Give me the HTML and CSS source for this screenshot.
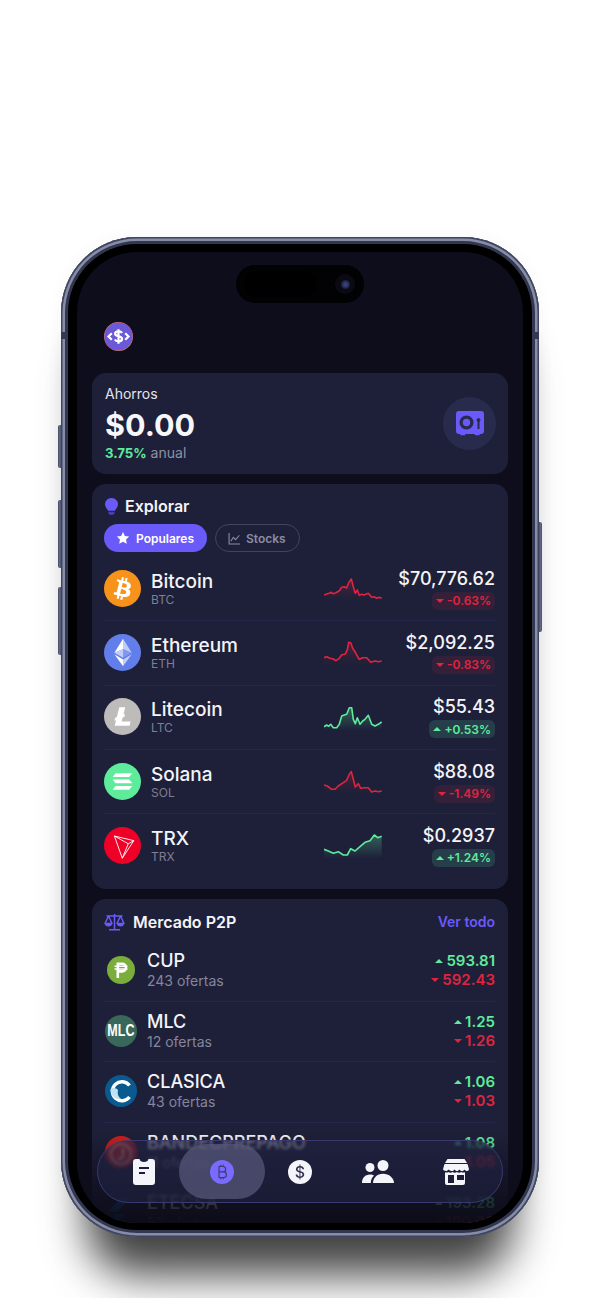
FILE: index.html
```html
<!DOCTYPE html>
<html lang="es">
<head>
<meta charset="utf-8">
<title>Wallet</title>
<link rel="stylesheet" href="styles.css">
</head>
<body>
<div class="device">
  <span class="side-btn btn-a"></span><span class="side-btn btn-b"></span><span class="side-btn btn-c"></span><span class="side-btn btn-d"></span>
  <span class="band band-l"></span><span class="band band-r"></span>
  <div class="screen">
    <div class="island"><span class="lens-a"></span><span class="lens-b"><i></i></span></div>
    <header class="top">
      <svg class="logo" viewBox="0 0 29 29"><defs><linearGradient id="lg" x1="0" y1="0" x2="1" y2="1"><stop offset="0" stop-color="#f59e2a"/><stop offset=".5" stop-color="#e0457a"/><stop offset="1" stop-color="#f5b02a"/></linearGradient></defs><circle cx="14.5" cy="14.5" r="14.5" fill="url(#lg)"/><circle cx="14.500" cy="14.500" r="14.100" fill="#6a5ad8"/><path d="M7.800 11.200 4.500 14.500l3.300 3.300M21.200 11.200l3.300 3.300-3.300 3.300" fill="none" stroke="#fff" stroke-width="2.200"/><path d="M18 11c-.5-1-1.800-1.700-3.500-1.700-2 0-3.400 1-3.400 2.500 0 3.400 7 1.800 7 5 0 1.500-1.500 2.500-3.600 2.500-1.800 0-3.100-.7-3.700-1.800M14.500 7.300v14.400" fill="none" stroke="#fff" stroke-width="2.200"/></svg>
    </header>

    <section class="card savings">
      <div>
        <div class="sav-label">Ahorros</div>
        <div class="sav-amount">$0.00</div>
        <div class="sav-rate"><b>3.75%</b> anual</div>
      </div>
      <div class="safe">
        <svg width="28" height="25" viewBox="0 0 28 25"><path fill="#6a5af9" fill-rule="evenodd" d="M3 0h22a3 3 0 0 1 3 3v17a3 3 0 0 1-3 3h-1l-.6 1.200H19L18.500 23h-9L9 24.200H4.600L4 23H3a3 3 0 0 1-3-3V3a3 3 0 0 1 3-3Zm7.500 4.500a7 7 0 1 0 0 14 7 7 0 0 0 0-14Zm0 3.300a3.700 3.700 0 1 1 0 7.400 3.700 3.700 0 0 1 0-7.400Zm12-.800a2 2 0 0 0-1 3.700v7.300h2v-7.300a2 2 0 0 0-1-3.700Z"/></svg>
      </div>
    </section>

    <section class="card explore">
      <div class="card-head">
        <svg width="13" height="17" viewBox="0 0 13 17"><path fill="#6a5af9" d="M6.500 0A6.300 6.300 0 0 1 13 6.200c0 2.300-1.300 3.600-2.200 5-.4.600-.6 1-.7 1.500H2.900c-.1-.5-.3-.9-.7-1.500C1.300 9.800 0 8.500 0 6.200A6.300 6.300 0 0 1 6.500 0Z"/><path fill="#4b3fb0" d="M3.400 13.800h6.200v1.200c0 1.100-1.300 2-3.100 2s-3.100-.9-3.100-2Z"/></svg>
        <h2>Explorar</h2>
      </div>
      <div class="chips">
        <span class="chip chip-on"><svg width="14" height="14" viewBox="0 0 24 24"><path fill="#fff" d="m12 1.800 3.200 6.700 7.300 1-5.300 5.100 1.300 7.300L12 18.400l-6.500 3.500 1.300-7.300L1.500 9.500l7.300-1Z"/></svg>Populares</span>
        <span class="chip chip-off"><svg width="13" height="13" viewBox="0 0 24 24"><path fill="none" stroke="#8a8ca3" stroke-width="2" d="M2 2v20h20M5 17l5-7 4 4 7-8"/></svg>Stocks</span>
      </div>

      <div class="row">
        <svg class="coin" viewBox="0 0 32 32"><circle cx="16" cy="16" r="16" fill="#f7931a"/><path fill="#fff" d="M23.189 14.020c.314-2.096-1.283-3.223-3.465-3.975l.708-2.840-1.728-.430-.690 2.765c-.454-.114-.920-.220-1.385-.326l.695-2.783L15.596 6l-.708 2.839c-.376-.086-.746-.170-1.104-.260l.002-.009-2.384-.595-.460 1.846s1.283.294 1.256.312c.700.175.826.638.805 1.006l-.806 3.235c.048.012.110.030.180.057l-.183-.045-1.130 4.532c-.086.212-.303.531-.793.410.018.025-1.256-.313-1.256-.313l-.858 1.978 2.250.561c.418.105.828.215 1.231.318l-.715 2.872 1.727.430.708-2.840c.472.127.930.245 1.378.357l-.706 2.828 1.728.430.715-2.866c2.948.558 5.164.333 6.097-2.333.752-2.146-.037-3.385-1.588-4.192 1.130-.260 1.980-1.003 2.207-2.538zm-3.950 5.538c-.533 2.147-4.148.986-5.320.695l.950-3.805c1.172.293 4.929.872 4.370 3.110zm.535-5.569c-.487 1.953-3.495.960-4.470.717l.860-3.450c.975.243 4.118.696 3.610 2.733z"/></svg>
        <div class="names"><div class="name">Bitcoin</div><div class="tick">BTC</div></div>
        <svg class="spark" viewBox="0 0 58 32"><defs><linearGradient id="gr" x1="0" y1="0" x2="0" y2="1"><stop offset="0" stop-color="#e0243f" stop-opacity=".22"/><stop offset=".85" stop-color="#e0243f" stop-opacity="0"/></linearGradient><linearGradient id="gg" x1="0" y1="0" x2="0" y2="1"><stop offset="0" stop-color="#5eeb9b" stop-opacity=".32"/><stop offset=".9" stop-color="#5eeb9b" stop-opacity="0"/></linearGradient></defs><path fill="url(#gr)" d="M0 23 2.700 22 5.300 21.300 6.700 20.300 9.300 21.700 12 20.700 15.300 18.700 17.700 15.300 20.300 14.700 22.700 16 24.700 10.700 27.300 7 29.300 14.700 31.300 21.300 33.300 18 35.300 23.300 37.700 22.300 40 23 44.300 21.300 47.700 25.300 50 24.700 52.700 26.300 55 25.300 57.700 26.300V32H0Z"/><polyline class="l-red" points="0,23 2.700,22 5.300,21.300 6.700,20.300 9.300,21.700 12,20.700 15.300,18.700 17.700,15.300 20.300,14.700 22.700,16 24.700,10.700 27.300,7 29.300,14.700 31.300,21.300 33.300,18 35.300,23.300 37.700,22.300 40,23 44.300,21.300 47.700,25.300 50,24.700 52.700,26.300 55,25.300 57.700,26.300"/></svg>
        <div class="vals"><div class="price">$70,776.62</div><span class="badge b-red"><i class="tri-d"></i>-0.63%</span></div>
      </div>

      <div class="row">
        <svg class="coin" viewBox="0 0 32 32"><circle cx="16" cy="16" r="16" fill="#627eea"/><g fill="#fff"><path fill-opacity=".602" d="M16.498 4v8.870l7.497 3.350z"/><path d="M16.498 4 9 16.220l7.498-3.350z"/><path fill-opacity=".602" d="M16.498 21.968v6.027L24 17.616z"/><path d="M16.498 27.995v-6.028L9 17.616z"/><path fill-opacity=".2" d="m16.498 20.573 7.497-4.353-7.497-3.348z"/><path fill-opacity=".602" d="m9 16.220 7.498 4.353v-7.701z"/></g></svg>
        <div class="names"><div class="name">Ethereum</div><div class="tick">ETH</div></div>
        <svg class="spark" viewBox="0 0 58 32"><path fill="url(#gr)" d="M0 21.700 2.700 20.700 6 22.300 9.300 23 12 24.700 15.300 22.300 17.700 18.700 21 18.300 23.300 14 24.700 6.300 26.700 6.700 28.700 12.300 31 15.700 32.700 19 35.300 23.300 38.700 21.700 42.700 21.700 46.700 26.300 51 25 54.300 25.700 57.700 25V32H0Z"/><polyline class="l-red" points="0,21.700 2.700,20.700 6,22.300 9.300,23 12,24.700 15.300,22.300 17.700,18.700 21,18.300 23.300,14 24.700,6.300 26.700,6.700 28.700,12.300 31,15.700 32.700,19 35.300,23.300 38.700,21.700 42.700,21.700 46.700,26.300 51,25 54.300,25.700 57.700,25"/></svg>
        <div class="vals"><div class="price">$2,092.25</div><span class="badge b-red"><i class="tri-d"></i>-0.83%</span></div>
      </div>

      <div class="row">
        <svg class="coin" viewBox="0 0 32 32"><circle cx="16" cy="16" r="16" fill="#bebbbb"/><path fill="#fff" d="m10.427 19.214-1.427.554.688-2.759 1.444-.580L13.213 8h5.129l-1.519 6.196 1.410-.571-.680 2.750-1.427.571-.848 3.483H23L22.127 24H9.252z"/></svg>
        <div class="names"><div class="name">Litecoin</div><div class="tick">LTC</div></div>
        <svg class="spark" viewBox="0 0 58 32"><path fill="url(#gg)" d="M0 25.700 2.700 24 4.700 25.300 6.700 23.300 9.300 26.700 12.700 26.700 15.300 23.300 17.700 15 20.300 14 22.700 13.300 25.300 6.700 27.700 6.700 29.300 18.300 31.300 22.700 33.300 16.700 36 23.300 38.700 20 41 18.300 44.300 14.300 47.700 23.300 51 25 54.300 23.300 57.700 21V32H0Z"/><polyline class="l-green" points="0,25.700 2.700,24 4.700,25.300 6.700,23.300 9.300,26.700 12.700,26.700 15.300,23.300 17.700,15 20.300,14 22.700,13.300 25.300,6.700 27.700,6.700 29.300,18.300 31.300,22.700 33.300,16.700 36,23.300 38.700,20 41,18.300 44.300,14.300 47.700,23.300 51,25 54.300,23.300 57.700,21"/></svg>
        <div class="vals"><div class="price">$55.43</div><span class="badge b-green"><i class="tri-u"></i>+0.53%</span></div>
      </div>

      <div class="row">
        <svg class="coin" viewBox="0 0 32 32"><circle cx="16" cy="16" r="16" fill="#5eeb9b"/><g fill="#fff"><path d="M10 8.800h14.500l-2.700 3.300H7.500Z"/><path d="M7.500 14.300h14.300l2.700 3.200H10Z"/><path d="M10 19.900h14.500l-2.700 3.300H7.500Z"/></g></svg>
        <div class="names"><div class="name">Solana</div><div class="tick">SOL</div></div>
        <svg class="spark" viewBox="0 0 58 32"><path fill="url(#gr)" d="M0 20 3.300 21 7.700 24.300 11 24.300 14.300 21 19.300 17.700 22.700 15.300 25.300 9.300 27.300 6.700 29.300 14.300 31.300 22 34.300 18.700 36.700 23.300 41 22.700 44.300 22.700 47.700 27 51 26 54.300 26.700 57.700 26V32H0Z"/><polyline class="l-red" points="0,20 3.300,21 7.700,24.300 11,24.300 14.300,21 19.300,17.700 22.700,15.300 25.300,9.300 27.300,6.700 29.300,14.300 31.300,22 34.300,18.700 36.700,23.300 41,22.700 44.300,22.700 47.700,27 51,26 54.300,26.700 57.700,26"/></svg>
        <div class="vals"><div class="price">$88.08</div><span class="badge b-red"><i class="tri-d"></i>-1.49%</span></div>
      </div>

      <div class="row">
        <svg class="coin" viewBox="0 0 32 32"><circle cx="16" cy="16" r="16" fill="#ef0027"/><path fill="none" stroke="#fff" stroke-width=".8" stroke-linejoin="round" d="M9 7.800 25.800 11.800 15.800 27ZM9 7.800 21 14.500 15.800 27M21 14.500 25.800 11.800"/></svg>
        <div class="names"><div class="name">TRX</div><div class="tick">TRX</div></div>
        <svg class="spark" viewBox="0 0 58 32"><path fill="url(#gg)" d="M0 20.300 4.300 22 9.300 24.300 14.300 22.700 19.300 26 23.300 26 26.700 19.700 31 22 36 17.700 41 13.300 46 11.700 50.300 6 53.700 8.700 57.700 7.300V32H0Z"/><polyline class="l-green" points="0,20.300 4.300,22 9.300,24.300 14.300,22.700 19.300,26 23.300,26 26.700,19.700 31,22 36,17.700 41,13.300 46,11.700 50.300,6 53.700,8.700 57.700,7.300"/></svg>
        <div class="vals"><div class="price">$0.2937</div><span class="badge b-green"><i class="tri-u"></i>+1.24%</span></div>
      </div>
    </section>

    <section class="card p2p">
      <div class="p2p-head">
        <svg width="21" height="18" viewBox="0 0 21 18"><g fill="none" stroke="#6a5af9" stroke-width="1.500" stroke-linejoin="round"><path d="M10.500 1v15M5 16.800h11M2.500 3h16"/><path d="M4.500 3 1 10.500h7ZM16.500 3 13 10.500h7Z"/></g><path fill="#6a5af9" d="M1 10.500h7a3.500 3 0 0 1-7 0ZM13 10.500h7a3.500 3 0 0 1-7 0Z"/></svg>
        <h2>Mercado P2P</h2>
        <a class="see-all">Ver todo</a>
      </div>

      <div class="p-row">
        <span class="p-icon"><svg width="28" height="28" viewBox="0 0 28 28"><circle cx="14" cy="14" r="14" fill="#7aad3b"/><path fill="none" stroke="#fff" stroke-width="2.600" d="M10.800 22V7.800h4.400a3.800 3.800 0 0 1 0 7.600h-4.400"/><path fill="none" stroke="#fff" stroke-width="1.400" d="M7.500 10.300h13M7.500 13h13"/></svg></span>
        <div class="p-names"><div class="p-name">CUP</div><div class="p-sub">243 ofertas</div></div>
        <div class="p-vals"><div class="up"><i class="tri-u"></i>593.81</div><div class="down"><i class="tri-d"></i>592.43</div></div>
      </div>
      <div class="p-row">
        <span class="p-icon mlc"><span class="mlc-text">MLC</span></span>
        <div class="p-names"><div class="p-name">MLC</div><div class="p-sub">12 ofertas</div></div>
        <div class="p-vals"><div class="up"><i class="tri-u"></i>1.25</div><div class="down"><i class="tri-d"></i>1.26</div></div>
      </div>
      <div class="p-row">
        <span class="p-icon"><svg width="32" height="32" viewBox="0 0 32 32"><circle cx="16" cy="16" r="16" fill="#0a5a8f"/><path fill="none" stroke="#fff" stroke-width="3.400" d="M24.500 10.500A9.500 9.500 0 1 0 24.500 22"/><path fill="#bfe3f2" d="M5.500 14c3-2 6-1 7.500 1-1 5 1 7 3 9-6 1-11-4-10.500-10Z"/></svg></span>
        <div class="p-names"><div class="p-name">CLASICA</div><div class="p-sub">43 ofertas</div></div>
        <div class="p-vals"><div class="up"><i class="tri-u"></i>1.06</div><div class="down"><i class="tri-d"></i>1.03</div></div>
      </div>
      <div class="p-row">
        <span class="p-icon"><svg width="32" height="32" viewBox="0 0 32 32"><circle cx="16" cy="16" r="16" fill="#d0211c"/><circle cx="16" cy="18" r="10" fill="none" stroke="#f0b0a8" stroke-width="2"/><path fill="none" stroke="#f0b0a8" stroke-width="2.400" d="M18 12v8a3 3 0 0 1-5 2"/></svg></span>
        <div class="p-names"><div class="p-name">BANDECPREPAGO</div><div class="p-sub">11 ofertas</div></div>
        <div class="p-vals"><div class="up"><i class="tri-u"></i>1.08</div><div class="down"><i class="tri-d"></i>1.05</div></div>
      </div>
      <div class="p-row">
        <span class="p-icon"><svg width="32" height="32" viewBox="0 0 32 32"><path fill="#0f5f9c" d="M2 16 16 2h10L12 16Zm6 2h12L8 30Z"/></svg></span>
        <div class="p-names"><div class="p-name">ETECSA</div><div class="p-sub">52 ofertas</div></div>
        <div class="p-vals"><div class="up"><i class="tri-u"></i>193.28</div><div class="down"><i class="tri-d"></i>190.00</div></div>
      </div>
    </section>

    <div class="fade"></div>

    <nav class="nav">
      <span class="nav-item"><svg width="22" height="26" viewBox="0 0 22 26"><path fill="#f4f4fb" fill-rule="evenodd" d="M3 0h3.500c.3 2 2 3 4.500 3s4.200-1 4.500-3H19a3 3 0 0 1 3 3v20a3 3 0 0 1-3 3H3a3 3 0 0 1-3-3V3a3 3 0 0 1 3-3Zm3 8v2h10V8Zm0 5v2h6v-2Z"/></svg></span>
      <span class="nav-item"><span class="pill"><svg width="24" height="24" viewBox="0 0 24 24"><circle cx="12" cy="12" r="12" fill="#7a6bff"/><path fill="none" stroke="#3f3a78" stroke-width="1.200" d="M9 6.500h4a2.700 2.700 0 0 1 0 5.400H9h4.600a2.800 2.800 0 0 1 0 5.600H9Zm0 0v11M10.800 4.800v1.700M13.200 4.800v1.700M10.800 17.500v1.700M13.200 17.500v1.700"/></svg></span></span>
      <span class="nav-item"><svg width="24" height="24" viewBox="0 0 24 24"><circle cx="12" cy="12" r="12" fill="#f4f4fb"/><text class="dollar" x="12" y="17.500" text-anchor="middle">$</text></svg></span>
      <span class="nav-item"><svg width="32" height="23" viewBox="0 0 32 23"><g fill="#f4f4fb"><circle cx="8" cy="7.500" r="4.500"/><circle cx="21" cy="5.500" r="5.500"/><path d="M0 23c0-5 3-8.500 8-8.500 1.700 0 3 .4 4.200 1.100C10 17.500 8.800 20 8.800 23Z"/><path d="M11 23c0-5 4-9.300 10-9.300S32 18 32 23Z"/></g></svg></span>
      <span class="nav-item"><svg width="26" height="26" viewBox="0 0 26 26"><path fill="#f4f4fb" fill-rule="evenodd" d="M4.500 0h17L24 4H2ZM1.500 5h23l1.500 5.300c0 .9-1 1.600-2 1.600-1.200 0-2-.6-2.400-1.500-.5.900-1.500 1.500-2.600 1.500s-2.100-.6-2.600-1.500c-.5.900-1.500 1.500-2.400 1.500s-1.900-.6-2.400-1.500c-.5.900-1.500 1.500-2.600 1.500S6 11.300 5.400 10.400C5 11.300 4 11.900 3 11.900s-3-.7-3-1.600ZM2 13.300c.9.300 2.200.3 3.300-.3 1.300 1 3 1 4.300 0 1.300 1 3 1 4.300 0 1.300 1 3 1 4.300 0 1.200.7 2.300.7 3.800.3V24a2 2 0 0 1-2 2H4a2 2 0 0 1-2-2Zm3 2.700v8h6v-8Zm9 0v5h7v-5Z"/></svg></span>
    </nav>
  </div>
</div>
</body>
</html>
```

FILE: styles.css
```css
* { box-sizing: border-box; }
html, body { margin: 0; height: 1298px; overflow: hidden; background: #fff; }
body { font-family: Inter, "Noto Sans", sans-serif; color: #f4f4f8; -webkit-font-smoothing: antialiased; }

.device {
  position: relative;
  width: 478px;
  height: 1000px;
  margin: 237px 0 0 61px;
  padding: 15px 16px 14px;
  border-radius: 76px;
  background: #000;
  box-shadow:
    inset 0 0 0 1.500px #3f4460,
    inset 0 0 0 4px #868da7,
    inset 0 0 0 7px #32364e,
    0 64px 44px -26px rgba(0, 0, 0, .74),
    0 0 14px 4px rgba(0, 0, 0, .025);
}
.side-btn { position: absolute; width: 3px; background: linear-gradient(90deg, #454a64, #666d8a 60%, #454a64); }
.btn-a { left: -3px; top: 188px; height: 43px; border-radius: 2px 0 0 2px; }
.btn-b { left: -3px; top: 263px; height: 68px; border-radius: 2px 0 0 2px; }
.btn-c { left: -3px; top: 350px; height: 68px; border-radius: 2px 0 0 2px; }
.btn-d { right: -3px; top: 285px; height: 110px; border-radius: 0 2px 2px 0; }
.band { position: absolute; top: 95px; width: 7px; height: 7px; background: #343850; }
.band-l { left: 0; }
.band-r { right: 0; }

.screen {
  position: relative;
  height: 100%;
  padding: 0 15px;
  overflow: hidden;
  border-radius: 60px;
  background: #0d0d1b;
}
.island {
  position: absolute;
  left: 159px;
  top: 13px;
  width: 128px;
  height: 38px;
  border-radius: 19px;
  background: #020204;
  display: flex;
  align-items: center;
  padding: 0 9px 0 8px;
  justify-content: space-between;
}
.lens-a { width: 72px; height: 26px; border-radius: 13px; background: #000; }
.lens-b { width: 20px; height: 20px; border-radius: 50%; background: #0a0a12; display: flex; align-items: center; justify-content: center; }
.lens-b i { width: 9px; height: 9px; border-radius: 50%; background: radial-gradient(circle, #39407a 20%, #171a34 75%); }

.top { height: 121px; padding: 70px 0 0 12px; }
.logo { display: block; width: 29px; height: 29px; }

.card { background: #1e2039; border-radius: 14px; margin-bottom: 10px; }
.savings { height: 101px; padding: 12px 12px 0 13px; display: flex; justify-content: space-between; }
.sav-label { font-size: 14px; line-height: 17px; color: #e4e4ec; }
.sav-amount { font-size: 30.500px; line-height: 39px; font-weight: 700; color: #f7f7fa; margin-top: 3px; }
.sav-rate { font-size: 14px; line-height: 17px; color: #8f90a6; }
.sav-rate b { color: #5eeb9b; font-weight: 700; font-size: 13.200px; }
.safe { width: 53px; height: 53px; margin-top: 12px; border-radius: 50%; background: #292b4c; display: flex; align-items: center; justify-content: center; }

.explore { height: 405px; padding: 12px 13px 0 12px; }
.card-head { display: flex; align-items: center; gap: 7px; height: 20px; margin-left: 1px; }
h2 { margin: 0; font-size: 16px; font-weight: 600; color: #f4f4f8; }
.chips { display: flex; gap: 8px; margin: 8px 0 4px; height: 28px; }
.chip { display: flex; align-items: center; gap: 6px; border-radius: 14px; font-size: 12px; font-weight: 600; }
.chip-on { width: 103px; padding-left: 12px; background: #6a5af9; color: #fff; }
.chip-off { width: 85px; padding-left: 12px; gap: 5px; border: 1px solid #43445a; color: #8a8ca3; }

.row { display: flex; align-items: center; height: 64.300px; position: relative; }
.row + .row::before { content: ""; position: absolute; left: 0; right: 0; top: 0; height: 1px; background: #25274a; }
.coin { width: 37px; height: 37px; flex: none; }
.names { width: 183px; padding-left: 10px; }
.name { font-size: 19px; line-height: 23px; font-weight: 500; color: #f4f4f8; margin-top: 1px; }
.tick { font-size: 12px; line-height: 15px; color: #7d7f96; margin-bottom: 1px; margin-top: -1px; }
.spark { width: 58px; height: 32px; flex: none; }
.l-red, .l-green { fill: none; stroke-width: 1.600; stroke-linejoin: round; }
.l-red { stroke: #e0243f; }
.l-green { stroke: #5eeb9b; }
.vals { flex: 1; display: flex; flex-direction: column; align-items: flex-end; gap: 1px; }
.price { font-size: 18px; line-height: 24px; font-weight: 500; color: #f4f4f8; }
.badge { display: flex; align-items: center; gap: 3px; height: 18px; padding: 0 4px; border-radius: 6px; font-size: 12px; font-weight: 600; }
.b-red { background: #35203a; color: #e0243f; }
.b-green { background: #263e4a; color: #5eeb9b; }
.tri-d, .tri-u { display: inline-block; width: 0; height: 0; border-left: 4px solid transparent; border-right: 4px solid transparent; }
.tri-d { border-top: 4px solid currentColor; }
.tri-u { border-bottom: 4px solid currentColor; }

.p2p { padding: 0 13px 0 12px; margin: 0; height: 340px; }
.p2p-head { display: flex; align-items: center; gap: 8px; height: 41px; padding-top: 4px; }
.see-all { margin-left: auto; font-size: 14px; font-weight: 600; color: #6a5af9; }
.p-row { display: flex; align-items: center; height: 60.500px; position: relative; }
.p-row + .p-row::before { content: ""; position: absolute; left: 0; right: 0; top: 0; height: 1px; background: #25274a; }
.p-icon { width: 32px; height: 32px; flex: none; margin-left: 1px; display: flex; align-items: center; justify-content: center; border-radius: 50%; }
.mlc { background: #39675a; color: #fff; font-family: "Liberation Sans", sans-serif; font-size: 16.500px; font-weight: 700; overflow: hidden; }
.mlc-text { display: block; transform: scaleX(.76); }
.p-names { flex: 1; padding-left: 10px; }
.p-name { font-size: 18px; line-height: 20px; font-weight: 500; color: #f4f4f8; margin-top: 1px; }
.p-sub { font-size: 14px; line-height: 18px; color: #85869c; margin-top: 1px; }
.p-vals { font-size: 15px; line-height: 19px; font-weight: 600; text-align: right; }
.p-vals i { margin-right: 3px; vertical-align: 3px; }
.up { color: #5eeb9b; }
.down { color: #e0243f; }

.fade {
  position: absolute;
  left: 0; right: 0; bottom: 0;
  height: 92px;
  background: linear-gradient(180deg, rgba(13, 13, 27, 0) 0%, rgba(13, 13, 27, .7) 60%, rgba(12, 12, 24, .98) 100%);
  pointer-events: none;
}
.nav {
  position: absolute;
  left: 20px;
  bottom: 20px;
  width: 406px;
  height: 63px;
  padding: 0 7px;
  display: flex;
  align-items: center;
  border-radius: 32px;
  border: 1px solid #3a3a70;
  background: rgba(34, 35, 66, .6);
  backdrop-filter: blur(1.500px);
}
.nav-item { width: 78px; display: flex; justify-content: center; align-items: center; flex: none; }
.pill { width: 86px; height: 55px; flex: none; border-radius: 28px; background: rgba(90, 90, 125, .7); display: flex; align-items: center; justify-content: center; }
.dollar { font-family: Inter, sans-serif; font-size: 16px; font-weight: 500; fill: #2f3050; }
```
